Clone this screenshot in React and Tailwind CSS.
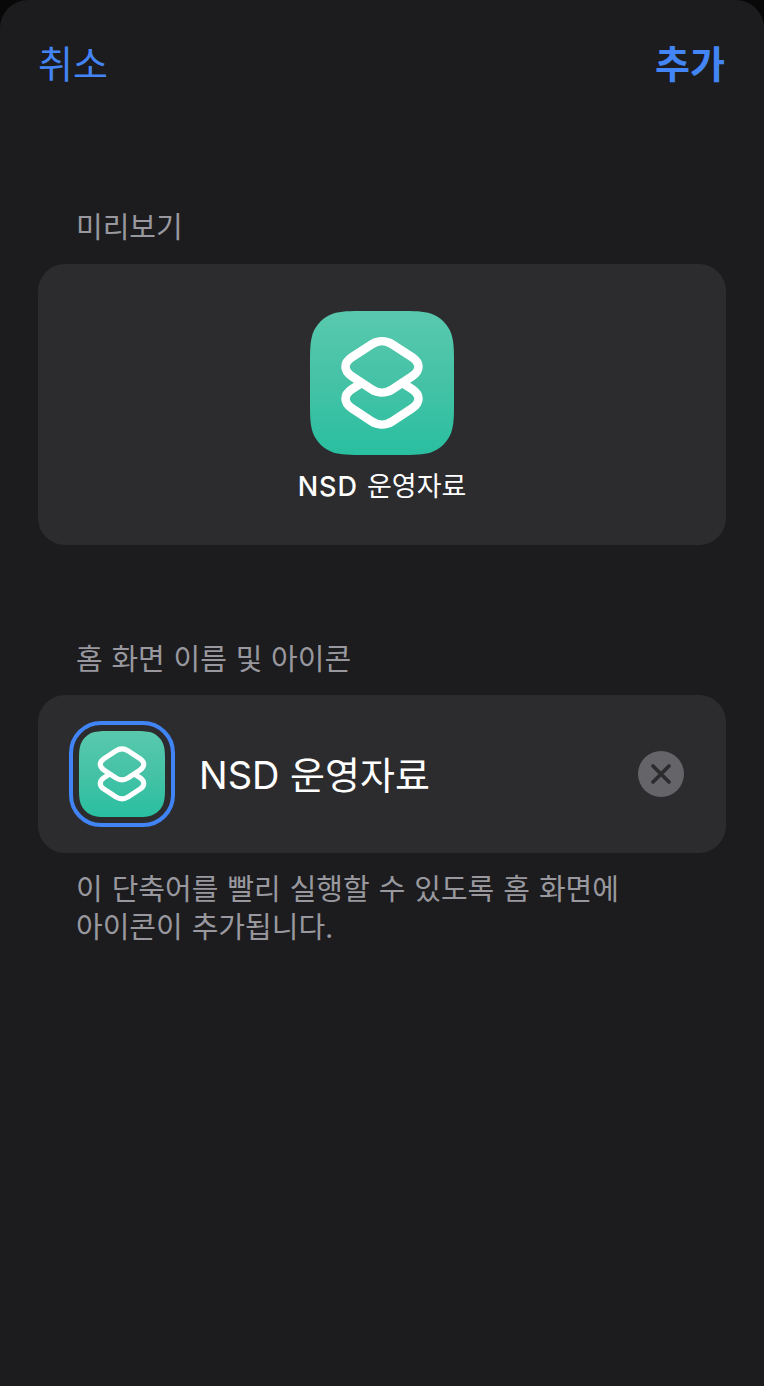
import React, { useId } from "react";

// Continuous-corner square on a 144 unit grid
const SQUIRCLE =
  "M55 0H89C104.8 0 112.7 0 121.3 2.7C130.6 6.1 137.9 13.4 141.3 22.7C144 31.3 144 39.2 144 55V89C144 104.8 144 112.7 141.3 121.3C137.9 130.6 130.6 137.9 121.3 141.3C112.7 144 104.8 144 89 144H55C39.2 144 31.3 144 22.7 141.3C13.4 137.9 6.1 130.6 2.7 121.3C0 112.7 0 104.8 0 89V55C0 39.2 0 31.3 2.7 22.7C6.1 13.4 13.4 6.1 22.7 2.7C31.3 0 39.2 0 55 0Z";

function ShortcutIcon({ className }) {
  const id = useId();
  return (
    <svg viewBox="0 0 144 144" className={className} fill="none">
      <defs>
        <linearGradient id={id} x1="0" y1="0" x2="0" y2="1">
          <stop offset="0" stopColor="#59c9ae" />
          <stop offset="0.5" stopColor="#45c2a6" />
          <stop offset="1" stopColor="#29bfa0" />
        </linearGradient>
      </defs>
      <path d={SQUIRCLE} fill={`url(#${id})`} />
      <g stroke="white" strokeWidth="8.6" strokeLinejoin="round">
        <path d="M61.7 33.3C68 29.2 76 29.2 82.3 33.3L102 46.2C110.6 51.9 110.6 59.7 102 65.4L82.3 78.4C76 82.5 68 82.5 61.7 78.4L42 65.4C33.4 59.7 33.4 51.9 42 46.2Z" />
        <path d="M52.5 71.3L42 78.2C33.4 83.9 33.4 91.7 42 97.4L61.7 110.4C68 114.5 76 114.5 82.3 110.4L102 97.4C110.6 91.7 110.6 83.9 102 78.2L91.5 71.3" />
      </g>
    </svg>
  );
}

export default function App() {
  return (
    <div className="h-[1386px] w-[764px] overflow-hidden bg-[#070807] font-['Inter','Noto_Sans_CJK_KR',sans-serif]">
      <main className="h-full rounded-t-[28px] bg-[#1c1c1e] px-[38px]">
        <header className="flex h-[128px] items-center justify-between text-[38px] leading-none text-[#4385f4]">
          <button className="whitespace-nowrap">취소</button>
          <button className="pr-px font-bold whitespace-nowrap">추가</button>
        </header>

        <section className="pt-[77px]">
          <h2 className="h-[59px] pl-[38px] text-[29px] leading-[46px] text-[#98989e]">미리보기</h2>
          <div className="flex h-[281px] flex-col items-center rounded-[27px] bg-[#2c2c2e] pt-[47px]">
            <ShortcutIcon className="size-[144px]" />
            <p className="mt-[12px] flex gap-[9px] text-[27px] leading-[40px] whitespace-nowrap text-white">
              <span className="font-[450] tracking-[1px]">NSD</span>
              <span>운영자료</span>
            </p>
          </div>
        </section>

        <section className="pt-[92px]">
          <h2 className="h-[58px] pl-[38px] text-[29px] leading-[46px] [word-spacing:0.6px] whitespace-nowrap text-[#98989e]">홈 화면 이름 및 아이콘</h2>
          <div className="flex h-[158px] items-center rounded-[27px] bg-[#2c2c2e] pr-[42px] pl-[31px]">
            <div className="flex size-[106px] shrink-0 items-center justify-center rounded-[32px] border-4 border-[#4084f5]">
              <ShortcutIcon className="size-[86px]" />
            </div>
            <span className="mt-[2px] ml-[24px] grow text-[38px] leading-[56px] whitespace-nowrap text-white">NSD 운영자료</span>
            <button className="size-[46px] shrink-0 rounded-full bg-[#656569]">
              <svg viewBox="0 0 46 46" className="size-full" stroke="#2c2c2e" strokeWidth="3.7" strokeLinecap="round">
                <path d="M15 15L31 31M31 15L15 31" />
              </svg>
            </button>
          </div>
          <p className="pt-[18px] pl-[38px] text-[29px] leading-[38px] [word-spacing:0.8px] whitespace-nowrap text-[#98989e]">
            이 단축어를 빨리 실행할 수 있도록 홈 화면에
            <br />
            아이콘이 추가됩니다.
          </p>
        </section>
      </main>
    </div>
  );
}
